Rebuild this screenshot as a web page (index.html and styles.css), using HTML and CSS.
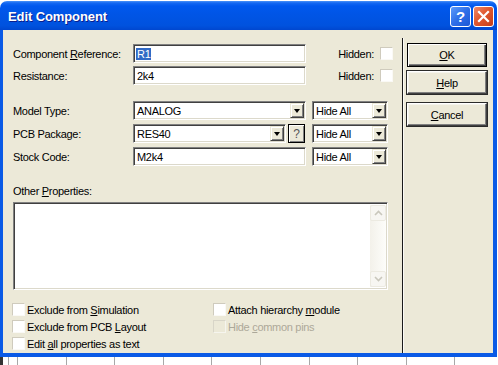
FILE: index.html
```html
<!DOCTYPE html>
<html>
<head>
<meta charset="utf-8">
<link rel="stylesheet" href="styles.css">
</head>
<body>
<div class="window">
  <div class="titlebar">
    <span class="title">Edit Component</span>
    <span class="tb-btn tb-help">?</span>
    <span class="tb-btn tb-close"><svg width="13" height="13" viewBox="0 0 13 13"><path d="M2 2 L11 11 M11 2 L2 11" stroke="#fff" stroke-width="2.2" stroke-linecap="square"/></svg></span>
  </div>
  <div class="frame">
    <div class="main">
      <div class="row r1">
        <span class="label">Component <u>R</u>eference:</span>
        <span class="field w173"><span class="sel">R1</span></span>
        <span class="hidden">Hidden:</span><span class="cb"></span>
      </div>
      <div class="row r2">
        <span class="label">Resistance:</span>
        <span class="field w173">2k4</span>
        <span class="hidden">Hidden:</span><span class="cb"></span>
      </div>
      <div class="row r3">
        <span class="label">Model Type:</span>
        <span class="field combo w173"><span class="val">ANALOG</span><span class="arrow"></span></span>
        <span class="field combo hide"><span class="val">Hide All</span><span class="arrow"></span></span>
      </div>
      <div class="row r4">
        <span class="label">PCB Package:</span>
        <span class="field combo w153"><span class="val">RES40</span><span class="arrow"></span></span>
        <span class="qbtn">?</span>
        <span class="field combo hide"><span class="val">Hide All</span><span class="arrow"></span></span>
      </div>
      <div class="row r5">
        <span class="label">Stock Code:</span>
        <span class="field w173">M2k4</span>
        <span class="field combo hide"><span class="val">Hide All</span><span class="arrow"></span></span>
      </div>
      <div class="other-label">Other <u>P</u>roperties:</div>
      <div class="textarea">
        <div class="scroll">
          <span class="sb-btn"><svg width="9" height="6" viewBox="0 0 9 6"><path d="M1 5 L4.5 1.5 L8 5" fill="none" stroke="#C9C7BC" stroke-width="1.6"/></svg></span>
          <span class="sb-track"></span>
          <span class="sb-btn"><svg width="9" height="6" viewBox="0 0 9 6"><path d="M1 1 L4.5 4.5 L8 1" fill="none" stroke="#C9C7BC" stroke-width="1.6"/></svg></span>
        </div>
      </div>
      <div class="checks">
        <div class="chk"><span class="cb"></span><span class="txt">Exclude from <u>S</u>imulation</span></div>
        <div class="chk"><span class="cb"></span><span class="txt">Attach hierarchy <u>m</u>odule</span></div>
        <div class="chk"><span class="cb"></span><span class="txt">Exclude from PCB <u>L</u>ayout</span></div>
        <div class="chk disabled"><span class="cb"></span><span class="txt">Hide <u>c</u>ommon pins</span></div>
        <div class="chk"><span class="cb"></span><span class="txt">Edit <u>a</u>ll properties as text</span></div>
      </div>
    </div>
    <div class="sep"></div>
    <div class="side">
      <span class="btn default"><span><u>O</u>K</span></span>
      <span class="btn help"><span><u>H</u>elp</span></span>
      <span class="btn cancel"><span><u>C</u>ancel</span></span>
    </div>
  </div>
</div>
<div class="desk"></div>
</body>
</html>
```
FILE: styles.css
```css
* { box-sizing: border-box; }
html, body { margin: 0; padding: 0; }
body {
  width: 498px;
  height: 365px;
  overflow: hidden;
  background: #fff;
  font-family: "Liberation Sans", Arial, sans-serif;
  font-size: 11px;
  letter-spacing: -0.3px;
  color: #000;
}
u { text-decoration: underline; text-underline-offset: 1px; }

.window { margin-top: 1px; width: 497px; }

.titlebar {
  height: 29px;
  border-radius: 7px 7px 0 0;
  background: linear-gradient(#4A93F7 0, #1468F2 2px, #0058EE 5px, #0055E6 45%, #0052DE 85%, #0047CF 100%);
  display: flex;
  align-items: center;
  padding: 0 3px 0 8px;
  gap: 2px;
}
.title {
  flex: 1;
  color: #fff;
  font-weight: bold;
  font-size: 13px;
  letter-spacing: -0.1px;
  text-shadow: 1px 1px #0A1E8C;
  padding-top: 1px;
}
.tb-btn {
  width: 21px;
  height: 21px;
  border: 1px solid #fff;
  border-radius: 3px;
  display: flex;
  align-items: center;
  justify-content: center;
  margin-top: 1px;
}
.tb-help {
  background: linear-gradient(135deg, #5C9BFA 0%, #2E6FE8 50%, #1D58D6 100%);
  color: #fff;
  font-weight: bold;
  font-size: 15px;
  letter-spacing: 0;
}
.tb-close {
  background: linear-gradient(135deg, #EE8A6A 0%, #E0582F 45%, #C43E1A 100%);
}

.frame {
  display: flex;
  height: 327px;
  background: #ECE9D8;
  border-left: 3px solid #0A5AE6;
  border-right: 4px solid #0A5AE6;
  border-bottom: 4px solid #0A5AE6;
}

.main {
  width: 399px;
  padding: 14px 9px 0 10px;
  display: flex;
  flex-direction: column;
}

.row { display: flex; align-items: center; height: 19px; }
.r2 { margin-top: 3px; }
.r3 { margin-top: 16px; }
.r4, .r5 { margin-top: 4px; }

.label { width: 120px; flex: none; white-space: nowrap; }

.field {
  height: 19px;
  background: #fff;
  border: 1px solid;
  border-color: #808080 #fff #fff #808080;
  box-shadow: inset 1px 1px #404040, inset -1px -1px #DCD9CB;
  padding: 0 3px;
  display: flex;
  align-items: center;
  flex: none;
  white-space: nowrap;
}
.w173 { width: 173px; }
.w153 { width: 153px; }
.hide { width: 76px; margin-left: 6px; }
.r4 .hide { margin-left: 7px; }
.sel { background: #316AC5; color: #fff; padding: 0 1px; margin-left: -1px; }

.combo { padding-right: 1px; }
.combo .val { flex: 1; }
.arrow {
  width: 14px;
  height: 15px;
  background: #ECE9D8;
  border: 1px solid;
  border-color: #ECE9D8 #404040 #404040 #ECE9D8;
  box-shadow: inset 1px 1px #fff, inset -1px -1px #808080;
  position: relative;
}
.arrow::after {
  content: "";
  position: absolute;
  left: 3px;
  top: 5px;
  border-left: 3.5px solid transparent;
  border-right: 3.5px solid transparent;
  border-top: 4px solid #000;
}

.qbtn {
  width: 17px;
  height: 19px;
  margin-left: 2px;
  flex: none;
  background: #ECE9D8;
  border: 1px solid #000;
  box-shadow: inset 1px 1px #fff, inset -1px -1px #808080;
  display: flex;
  align-items: center;
  justify-content: center;
  color: #555;
  font-size: 12px;
}

.hidden { margin-left: auto; margin-right: 6px; }
.cb {
  width: 13px;
  height: 13px;
  flex: none;
  background: #fff;
  border: 1px solid;
  border-color: #CFCBBD #FAF9F5 #FAF9F5 #CFCBBD;
}

.other-label { margin-top: 19px; line-height: 13px; }
.textarea {
  margin-top: 4px;
  width: 375px;
  height: 88px;
  background: #fff;
  border: 1px solid;
  border-color: #808080 #fff #fff #808080;
  box-shadow: inset 1px 1px #404040, inset -1px -1px #DCD9CB;
  display: flex;
  justify-content: flex-end;
  padding: 2px 1px 2px 2px;
}
.scroll {
  width: 16px;
  display: flex;
  flex-direction: column;
  background: linear-gradient(to right, #F3F1EA, #FDFDFA);
}
.sb-btn {
  height: 16px;
  border: 1px solid #ECEAE1;
  border-radius: 2px;
  background: #F7F6F2;
  display: flex;
  align-items: center;
  justify-content: center;
}
.sb-track { flex: 1; }

.checks {
  margin-top: 13px;
  display: grid;
  grid-template-columns: 201px auto;
  row-gap: 4px;
  margin-left: -1px;
}
.chk { display: flex; align-items: center; height: 13px; gap: 2px; white-space: nowrap; }
.chk.disabled { color: #ACA899; }
.chk.disabled .cb { background: transparent; border-color: #D8D5C8 #F6F5EE #F6F5EE #D8D5C8; }

.sep {
  width: 2px;
  margin-top: 8px;
  border-left: 1px solid #1A1A1A;
  border-right: 1px solid #FBFAF6;
}

.side {
  flex: 1;
  padding: 13px 0 0 3px;
  display: flex;
  flex-direction: column;
}
.btn {
  width: 80px;
  height: 23px;
  display: flex;
  align-items: center;
  justify-content: center;
  background: #ECE9D8;
  border: 1px solid;
  border-color: #fff #404040 #404040 #fff;
  box-shadow: inset -1px -1px #808080, inset 1px 1px #F4F3EC;
  outline: 1px solid #2A2A2A;
}
.btn.default {
  border: 1px solid #000;
  box-shadow: inset 1px 1px #fff, inset -1px -1px #404040, inset -2px -2px #808080;
  outline: none;
  height: 24px;
}
.btn.help { margin-top: 4px; }
.btn.cancel { margin-top: 9px; }

.desk {
  height: 8px;
  width: 498px;
  background-color: #fff;
  background-image: repeating-linear-gradient(to right, #A8A8A8 0, #A8A8A8 1px, transparent 1px, transparent 48.6px);
  background-position: 14px 0;
  border-left: 3px solid #333;
}
```
